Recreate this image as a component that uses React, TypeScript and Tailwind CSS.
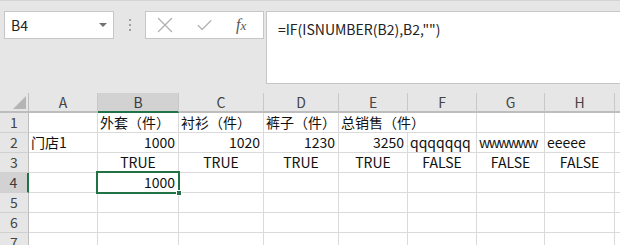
import { X, Check } from 'lucide-react';

type Align = 'left' | 'right' | 'center';

interface Cell {
  text: string;
  align: Align;
  overflow?: boolean;
  tight?: boolean;
}

const columns = [
  { id: 'A', w: 69 },
  { id: 'B', w: 81 },
  { id: 'C', w: 85 },
  { id: 'D', w: 75 },
  { id: 'E', w: 69 },
  { id: 'F', w: 69 },
  { id: 'G', w: 68 },
  { id: 'H', w: 70 },
  { id: 'I', w: 40 },
];

const rows: Record<number, Record<string, Cell>> = {
  1: {
    B: { text: '外套（件）', align: 'left' },
    C: { text: '衬衫（件）', align: 'left' },
    D: { text: '裤子（件）', align: 'left' },
    E: { text: '总销售（件）', align: 'left', overflow: true },
  },
  2: {
    A: { text: '门店1', align: 'left' },
    B: { text: '1000', align: 'right' },
    C: { text: '1020', align: 'right' },
    D: { text: '1230', align: 'right' },
    E: { text: '3250', align: 'right' },
    F: { text: 'qqqqqqq', align: 'left' },
    G: { text: 'wwwwww', align: 'left', tight: true },
    H: { text: 'eeeee', align: 'left' },
  },
  3: {
    B: { text: 'TRUE', align: 'center' },
    C: { text: 'TRUE', align: 'center' },
    D: { text: 'TRUE', align: 'center' },
    E: { text: 'TRUE', align: 'center' },
    F: { text: 'FALSE', align: 'center' },
    G: { text: 'FALSE', align: 'center' },
    H: { text: 'FALSE', align: 'center' },
  },
  4: {
    B: { text: '1000', align: 'right' },
  },
};

const alignClass: Record<Align, string> = {
  left: 'justify-start pl-[2px]',
  right: 'justify-end pr-[3px]',
  center: 'justify-center',
};

function NameBox() {
  return (
    <div className="w-[110px] h-[28px] ml-[4px] bg-white border border-[#c6c6c6] flex items-center justify-between pl-[6px] pr-[6px]">
      <span className="text-[14px] text-[#222]">B4</span>
      <span className="w-0 h-0 border-l-[4px] border-r-[4px] border-t-[4px] border-l-transparent border-r-transparent border-t-[#707070]" />
    </div>
  );
}

function FxBox() {
  return (
    <div className="w-[119px] h-[28px] bg-white border border-[#c6c6c6] flex items-center">
      <X className="w-[26px] h-[26px] text-[#b0b0b0] ml-[6px] shrink-0" strokeWidth={1.2} />
      <Check className="w-[19px] h-[19px] text-[#b0b0b0] ml-[17px] shrink-0" strokeWidth={1.5} />
      <span className="ml-[22px] text-[16px] italic text-[#555] font-['Liberation_Serif',serif] leading-none">
        f<span className="text-[13px]">x</span>
      </span>
    </div>
  );
}

function Toolbar() {
  return (
    <div className="h-[92px] flex items-start pt-[10px]">
      <NameBox />
      <div className="w-[31px] h-[28px] flex flex-col items-center justify-center gap-[3px]">
        <span className="w-[2px] h-[2px] bg-[#a0a0a0]" />
        <span className="w-[2px] h-[2px] bg-[#a0a0a0]" />
        <span className="w-[2px] h-[2px] bg-[#a0a0a0]" />
      </div>
      <FxBox />
      <div className="flex-1 ml-[2px] -mr-[2px] h-[73px] bg-white border border-[#c6c6c6] pl-[11px] pt-[4px]">
        <span className="text-[14px] text-[#222]">=IF(ISNUMBER(B2),B2,"")</span>
      </div>
    </div>
  );
}

function HeaderRow() {
  return (
    <div className="flex h-[20px]">
      <div className="w-[29px] shrink-0 border-r border-b-2 border-[#bdbdbd] flex items-end justify-end pr-[2px] pb-[2px]">
        <span className="block w-[13px] h-[13px] bg-[#b5b5b5] [clip-path:polygon(100%_0,100%_100%,0_100%)]" />
      </div>
      {columns.map((c) => {
        const selected = c.id === 'B';
        return (
          <div
            key={c.id}
            style={{ width: c.w }}
            className={`shrink-0 border-r border-[#c8c8c8] border-b-2 flex items-end justify-center leading-[18px] text-[14px] ${
              selected ? 'bg-[#d2d2d2] border-b-[#217346] text-[#3b3b3b]' : 'border-b-[#bdbdbd] text-[#444]'
            }`}
          >
            {c.id === 'I' ? '' : c.id}
          </div>
        );
      })}
    </div>
  );
}

function DataRow({ n }: { n: number }) {
  const data = rows[n] ?? {};
  const selectedRow = n === 4;
  return (
    <div className="flex h-[20px]">
      <div
        className={`w-[29px] shrink-0 border-b border-[#d0d0d0] flex items-end justify-center leading-[19px] text-[14px] ${
          selectedRow ? 'bg-[#d2d2d2] border-r-2 border-r-[#217346] text-[#3b3b3b]' : 'bg-[#e6e6e6] border-r border-r-[#bdbdbd] text-[#444]'
        }`}
      >
        {n}
      </div>
      {columns.map((c) => {
        const cell = data[c.id];
        return (
          <div
            key={c.id}
            style={{ width: c.w }}
            className={`shrink-0 border-b border-[#dadada] flex items-end leading-[19px] text-[14px] text-[#111] whitespace-nowrap overflow-visible ${
              cell?.overflow ? '' : 'border-r'
            } ${cell ? alignClass[cell.align] : ''}`}
          >
            {cell && (
              <span className={`relative z-10 ${cell.tight ? 'tracking-[-1.6px]' : ''}`}>{cell.text}</span>
            )}
          </div>
        );
      })}
    </div>
  );
}

export default function App() {
  return (
    <div className="w-[620px] h-[245px] overflow-hidden bg-[#e6e6e6] border-t border-[#d4d4d4] font-['Noto_Sans_CJK_SC',sans-serif]">
      <Toolbar />
      <div className="relative">
        <HeaderRow />
        <div className="bg-white">
          {[1, 2, 3, 4, 5, 6, 7].map((n) => (
            <DataRow key={n} n={n} />
          ))}
        </div>
        {/* active cell B4 */}
        <div className="absolute left-[96px] top-[78px] w-[84px] h-[23px] border-2 border-[#217346] pointer-events-none">
          <span className="absolute -right-[4px] -bottom-[4px] w-[6px] h-[6px] bg-[#217346] border border-white" />
        </div>
      </div>
    </div>
  );
}
